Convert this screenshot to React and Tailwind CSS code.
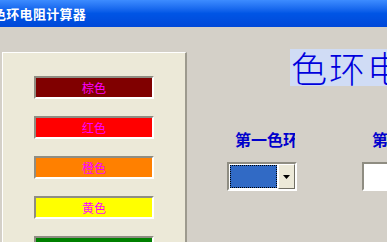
const bands = [
  { name: '棕色', bg: 'bg-[#800000]' },
  { name: '红色', bg: 'bg-[#ff0000]' },
  { name: '橙色', bg: 'bg-[#ff8000]' },
  { name: '黄色', bg: 'bg-[#ffff00]' },
  { name: '绿色', bg: 'bg-[#008000]' },
];

function Combo({ selected }) {
  return (
    <div className="flex h-[29px] w-[70px] shrink-0 border-t-2 border-l-2 border-t-[#8f8d82] border-l-[#8f8d82] border-b-2 border-r-2 border-b-white border-r-white bg-white">
      <div className="flex-1 p-[1px]">
        {selected ? (
          <div className="h-full w-full border border-dotted border-black bg-[#316ac5]" />
        ) : null}
      </div>
      <div className="flex w-[17px] items-center justify-center border-l border-t border-l-white border-t-white border-r border-b border-r-[#716f64] border-b-[#716f64] bg-[#ece9d8]">
        <svg width="7" height="4" viewBox="0 0 7 4">
          <path d="M0 0h7L3.5 4z" fill="#000" />
        </svg>
      </div>
    </div>
  );
}

export default function App() {
  return (
    <div
      className="relative h-[242px] w-[387px] overflow-hidden bg-[#d4d0c8]"
      style={{ fontFamily: '"Noto Sans CJK SC", "Liberation Sans", sans-serif' }}
    >
      {/* title bar */}
      <div className="flex h-[27px] items-center bg-gradient-to-b from-[#3d8cff] via-[#0055e5] to-[#0048d8]">
        <span className="ml-[-7px] text-[13px] font-bold leading-none tracking-[0.3px] text-white">
          色环电阻计算器
        </span>
      </div>

      <div className="flex">
        {/* band list */}
        <div className="ml-[2px] mt-[25px] h-[230px] w-[185px] shrink-0 border-l border-t border-l-white border-t-white border-r-2 border-r-[#9d9a8e] bg-[#ece9d8] pl-[31px] pt-[23px]">
          <div className="flex flex-col gap-[17px]">
            {bands.map((b) => (
              <div
                key={b.name}
                className={`flex h-[23px] w-[120px] items-center justify-center border-t-2 border-l-2 border-t-[#8f8d82] border-l-[#8f8d82] border-b-2 border-r-2 border-b-white border-r-white ${b.bg}`}
              >
                <span className="text-[12px] leading-none text-[#ff00ff]">{b.name}</span>
              </div>
            ))}
          </div>
        </div>

        {/* right side */}
        <div className="flex min-w-0 flex-col">
          <div className="ml-[103px] mt-[22px] h-[37px] whitespace-nowrap bg-[#d0dcf5] pl-[1px] text-[36px] font-light leading-[37px] tracking-[2px] text-[#0000dd]">
            色环电阻计算器
          </div>

          <div className="ml-[40px] mt-[44px] flex gap-[65px]">
            <div className="flex shrink-0 flex-col gap-[14px]">
              <div className="ml-[8px] h-[18px] w-[60px] overflow-hidden whitespace-nowrap text-[16px] font-bold leading-[18px] text-[#0000cc]">
                第一色环
              </div>
              <Combo selected />
            </div>
            <div className="flex shrink-0 flex-col gap-[14px]">
              <div className="ml-[10px] h-[18px] w-[60px] overflow-hidden whitespace-nowrap text-[16px] font-bold leading-[18px] text-[#0000cc]">
                第二色环
              </div>
              <Combo />
            </div>
          </div>
        </div>
      </div>
    </div>
  );
}
